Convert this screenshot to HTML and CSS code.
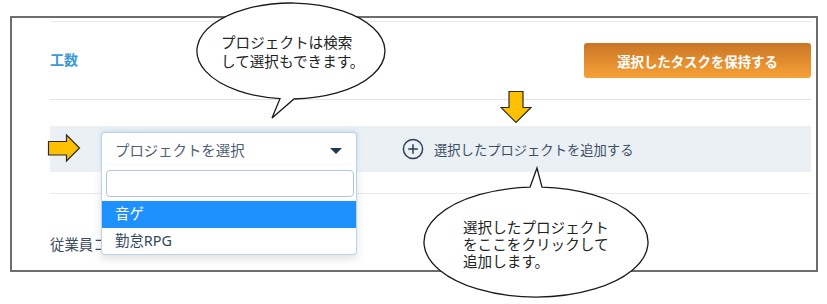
FILE: index.html
```html
<!DOCTYPE html>
<html lang="ja">
<head>
  <meta charset="UTF-8" />
  <title>工数 - プロジェクト追加</title>
  <meta name="viewport" content="width=device-width, initial-scale=1" />
  <link rel="stylesheet" href="styles.css">
</head>
<body>
  <div class="page">
    <div class="frame">
      <div class="head">
        <div class="title">工数</div>
        <button class="keep-btn">選択したタスクを保持する</button>
      </div>

      <div class="project-row">
        <div class="select">
          <div class="select-trigger">
            <span>プロジェクトを選択</span>
            <span class="caret"></span>
          </div>
          <div class="select-menu">
            <input class="select-search" type="text" />
            <div class="select-item active">音ゲ</div>
            <div class="select-item">勤怠RPG</div>
          </div>
        </div>
        <div class="add-link">
          <svg class="plus" width="22" height="22" viewBox="0 0 22 22">
            <circle cx="11" cy="11" r="9.6" fill="none" stroke="#2c3f56" stroke-width="1.5" />
            <path d="M11 6.2V15.8M6.2 11H15.8" stroke="#2c3f56" stroke-width="1.5" />
          </svg>
          選択したプロジェクトを追加する
        </div>
      </div>

      <div class="divider"></div>
      <div class="employee">従業員コード</div>
    </div>

    <!-- annotations -->
    <svg class="arrow-right" width="36" height="30" viewBox="0 0 36 30">
      <path d="M1.5 7.5H19.5V1L32.5 14L19.5 27V21H1.5Z" fill="#ffc000" stroke="#2b2b2b" stroke-width="1.2" />
    </svg>
    <svg class="arrow-down" width="34" height="36" viewBox="0 0 34 36">
      <path d="M9 1.5H23V17.5H31L16 32.5L1 17.5H9Z" fill="#ffc000" stroke="#2b2b2b" stroke-width="1.2" />
    </svg>

    <div class="callout callout-search">
      <svg width="200" height="125" viewBox="0 0 200 125">
        <path d="M104 99 A94 48 0 1 0 90 98.7 L82 118 Z" fill="#fff" stroke="#1a1a1a" stroke-width="1.3" />
      </svg>
      <div class="callout-text">プロジェクトは検索<br />して選択もできます。</div>
    </div>

    <div class="callout callout-add">
      <svg width="240" height="144" viewBox="0 0 240 144">
        <path d="M115 27.2 L122 8 L127 27.2 A112 55 0 1 1 115 27.2 Z" fill="#fff" stroke="#1a1a1a" stroke-width="1.3" />
      </svg>
      <div class="callout-text">選択したプロジェクト<br />をここをクリックして<br />追加します。</div>
    </div>
  </div>
</body>
</html>
```

FILE: styles.css
```css
body {
  margin: 0;
  background: white;
  font-family: "Noto Sans", "Noto Sans CJK JP", sans-serif;
}

.page {
  position: relative;
  width: 827px;
  height: 304px;
  overflow: hidden;
}

.frame {
  box-sizing: border-box;
  width: 808px;
  height: 256px;
  margin: 16px 0 0 10px;
  border: 2px solid #6d6d6d;
  padding: 3px 5px 0 38px;
}

.head {
  height: 77px;
  display: flex;
  align-items: center;
  justify-content: space-between;
  border-top: 1px solid #e6e8ea;
  border-bottom: 1px solid #e2e4e6;
}

.title {
  color: #3e9ad5;
  font-weight: bold;
  font-size: 14px;
  margin-top: -4px;
}

.keep-btn {
  width: 227px;
  height: 35px;
  border: none;
  border-radius: 3px;
  background: linear-gradient(#c97626, #f8a137);
  color: white;
  font-family: inherit;
  font-weight: bold;
  font-size: 13.4px;
  padding: 0;
}

.project-row {
  margin-top: 26px;
  height: 46px;
  background: #ebf0f5;
  display: flex;
  align-items: center;
  padding-left: 51px;
}

.select {
  position: relative;
  width: 256px;
  height: 34px;
}

.select-trigger {
  box-sizing: border-box;
  height: 34px;
  display: flex;
  align-items: center;
  justify-content: space-between;
  padding: 0 14px 0 13px;
  background: white;
  border: 1px solid #b9d3ec;
  border-bottom: none;
  border-radius: 4px 4px 0 0;
  box-shadow: 0 -1px 4px rgba(110, 165, 220, 0.3);
  color: #50606f;
  font-size: 14.4px;
}

.caret {
  width: 0;
  height: 0;
  border-left: 6px solid transparent;
  border-right: 6px solid transparent;
  border-top: 6px solid #1e3755;
  margin-top: 2px;
}

.select-menu {
  position: absolute;
  top: 34px;
  left: 0;
  right: 0;
  background: white;
  border: 1px solid #b9d3ec;
  border-top: none;
  border-radius: 0 0 4px 4px;
  box-shadow: 0 4px 8px rgba(0, 0, 0, 0.12);
  padding-top: 4px;
  z-index: 2;
}

.select-search {
  display: block;
  box-sizing: border-box;
  width: 248px;
  height: 27px;
  margin: 0 0 4px 4px;
  border: 1px solid #b3c6d9;
  border-radius: 4px;
}

.select-item {
  height: 26.5px;
  line-height: 26px;
  padding-left: 13px;
  font-size: 14.4px;
  color: #33475b;
}

.select-item.active {
  background: #1e90ff;
  color: white;
}

.add-link {
  display: flex;
  align-items: center;
  gap: 10px;
  margin-left: 45px;
  color: #3b4e63;
  font-size: 13.3px;
}

.plus {
  display: block;
}

.divider {
  margin-top: 21px;
  border-top: 1px solid #e8eaec;
}

.employee {
  margin-top: 41px;
  line-height: 20px;
  font-size: 14.4px;
  color: #3d4c5c;
}

.arrow-right {
  position: absolute;
  left: 47px;
  top: 134px;
}

.arrow-down {
  position: absolute;
  left: 500px;
  top: 90px;
}

.callout {
  position: absolute;
}

.callout svg {
  position: absolute;
  left: 0;
  top: 0;
}

.callout-text {
  position: absolute;
  white-space: nowrap;
  font-size: 14.6px;
  color: #222;
}

.callout-search {
  left: 190px;
  top: 0;
  width: 200px;
  height: 125px;
}

.callout-search .callout-text {
  left: 31px;
  top: 33px;
  line-height: 19px;
}

.callout-add {
  left: 415px;
  top: 160px;
  width: 240px;
  height: 144px;
}

.callout-add .callout-text {
  left: 48px;
  top: 59px;
  line-height: 17px;
}
```
